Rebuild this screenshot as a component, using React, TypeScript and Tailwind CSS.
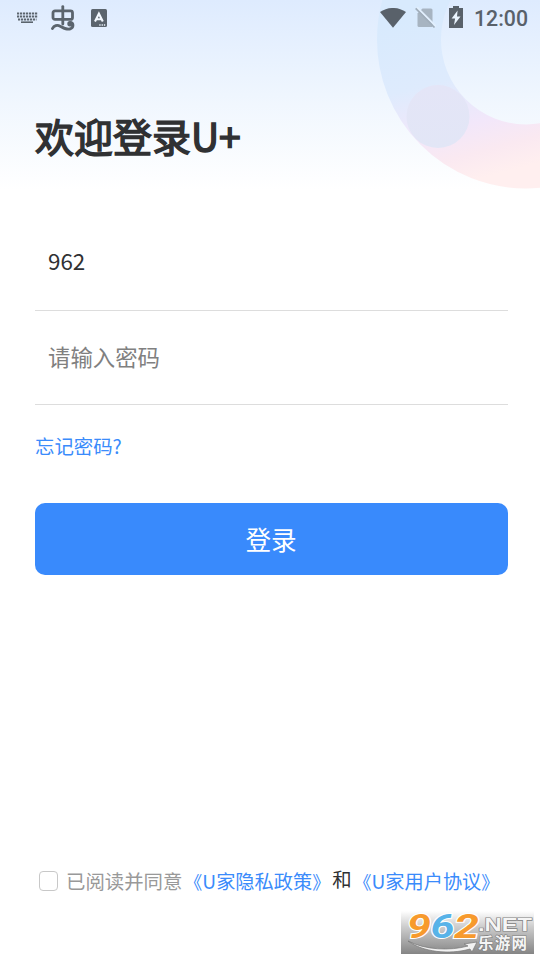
import { useState } from 'react'

/** Small status bar glyphs on the left: keyboard, worm, input method. */
function StatusLeft() {
  return (
    <div className="flex items-center text-[#5b646d]">
      <svg className="h-[14px] w-[22px]" viewBox="0 0 22 14" fill="none" stroke="currentColor">
        <path d="M1 2.500H21.500" strokeWidth="1.800" strokeDasharray="2.200 0.800" />
        <path d="M1 5.500H21.500" strokeWidth="1.800" strokeDasharray="2.200 0.800" />
        <path d="M2 8.500H20.500" strokeWidth="1.800" strokeDasharray="2.200 0.800" />
        <path d="M5 11.200H17" strokeWidth="1.600" />
      </svg>
      <svg
        className="ml-[12px] h-[28px] w-[26px]"
        viewBox="0 0 26 28"
        fill="none"
        stroke="currentColor"
        strokeWidth="2.8"
        strokeLinecap="round"
        strokeLinejoin="round"
      >
        <rect x="3" y="6.800" width="19.500" height="8.600" rx="2" />
        <path d="M12.800 2.600V20" />
        <path d="M2.400 24.600c1.600-3 4.800-4 7.800-2.400 4 2.200 7 4 10.600 2.400 3-1.500 2.800-6-.2-6" />
        <circle cx="20" cy="19.800" r="1.300" />
      </svg>
      <svg className="ml-[15px] h-[18px] w-[16px]" viewBox="0 0 16 18">
        <rect width="16" height="18" rx="1.500" fill="currentColor" />
        <path d="M4 12.500 7.900 4.700 11.800 12.500M5.500 10.300h4.800" fill="none" stroke="#f4f9ff" strokeWidth="2.100" />
        <path d="M8.300 16h6" stroke="#eef5fe" strokeWidth="1.300" strokeDasharray="1.300 1" />
      </svg>
    </div>
  )
}

function StatusRight() {
  return (
    <div className="flex items-center text-[#59616a]">
      <svg className="h-[21px] w-[26px]" viewBox="0 0 26 21" fill="currentColor">
        <path d="M0 4.100C7.500-1.400 18.500-1.400 26 4.100L13 19.800Z" />
      </svg>
      <svg className="ml-[9px] h-[22px] w-[21px]" viewBox="0 0 21 22">
        <path d="M7.500 1.500H16a1.500 1.500 0 0 1 1.500 1.500V20H4a1.500 1.500 0 0 1-1.500-1.500V6.500Z" fill="#a7b4c1" />
        <path d="M1.800.2 21 19.400" stroke="#e2effd" strokeWidth="2" />
        <path d="M.7 1.300 19.500 20.500" stroke="#a0adba" strokeWidth="1.700" />
      </svg>
      <svg className="ml-[13px] mb-[2px] h-[22px] w-[14px]" viewBox="0 0 14 22">
        <path d="M4 0h6v2h4v20H0V2h4Z" fill="currentColor" />
        <path d="M8.600 4.500 2.600 12.500h3.500L5 19 11.500 10.500H8Z" fill="#eaf4fe" />
      </svg>
      <span className="ml-[11px] mt-[2px] font-[Roboto,sans-serif] text-[21.300px] font-medium leading-6">12:00</span>
    </div>
  )
}

/** Pale ring and dot behind the top right corner. */
function HeaderArt() {
  return (
    <svg className="absolute right-0 top-0 h-[200px] w-[180px]" viewBox="360 0 180 200">
      <defs>
        <linearGradient id="ring" gradientUnits="userSpaceOnUse" x1="400" y1="20" x2="445" y2="188">
          <stop offset="0" stopColor="#d8eafd" />
          <stop offset="0.4" stopColor="#deebfd" />
          <stop offset="0.68" stopColor="#f2e7fa" />
          <stop offset="0.85" stopColor="#fae9f1" />
          <stop offset="1" stopColor="#ffefef" />
        </linearGradient>
        <linearGradient id="dot" x1="0" y1="0" x2="0" y2="1">
          <stop offset="0" stopColor="#e4e5f7" />
          <stop offset="1" stopColor="#e2e6f6" />
        </linearGradient>
      </defs>
      <circle cx="526" cy="39.500" r="117" fill="none" stroke="url(#ring)" strokeWidth="64" />
      <circle cx="438" cy="116.500" r="31.500" fill="url(#dot)" />
    </svg>
  )
}

function SiteBadge() {
  return (
    <svg
      className="absolute left-[401px] top-[911px] h-[43px] w-[133px] overflow-visible"
      viewBox="0 0 133 43"
      fontFamily="'Liberation Sans', 'Noto Sans CJK SC', sans-serif"
      fontWeight="bold"
    >
      <defs>
        <linearGradient id="badge" x1="0" y1="0" x2="0" y2="1">
          <stop offset="0" stopColor="#ffffff" />
          <stop offset="0.35" stopColor="#cfcfcf" />
          <stop offset="1" stopColor="#858585" />
        </linearGradient>
      </defs>
      <rect width="133" height="43" fill="url(#badge)" />
      <g fontSize="33" fontFamily="Roboto, sans-serif" fontStyle="italic" stroke="#ffffff" strokeWidth="2" paintOrder="stroke">
        <text x="6" y="26.500" textLength="24" lengthAdjust="spacingAndGlyphs" fill="#f79a2d">9</text>
        <text x="29.500" y="26.500" textLength="24" lengthAdjust="spacingAndGlyphs" fill="#58b3e8">6</text>
        <text x="53" y="26.500" textLength="25" lengthAdjust="spacingAndGlyphs" fill="#f79a2d">2</text>
      </g>
      <path d="M7 30C24 39 49 40 67 35L63 33 76 31 71 41 69 38C48 44 22 41 7 30Z" fill="#f2f2f2" stroke="#777777" strokeWidth="0.700" />
      <g fill="#f5f5f5" stroke="#808080" strokeWidth="1.200" paintOrder="stroke">
        <text x="77" y="20" fontSize="18" textLength="54" lengthAdjust="spacingAndGlyphs">.NET</text>
        <text x="77" y="38" fontSize="15.500" textLength="49">乐游网</text>
      </g>
    </svg>
  )
}

/** Agreement link; the book title marks are set a little smaller than the name. */
function DocLink({ name }: { name: string }) {
  return (
    <a className="flex items-center text-[19.200px] text-[#3a8bfb]">
      <span className="ml-[2px] text-lg leading-[30px]">《</span>
      {name}
      <span className="mr-[2px] text-lg leading-[30px]">》</span>
    </a>
  )
}

export default function App() {
  const [agreed, setAgreed] = useState(false)

  return (
    <div className="relative flex h-[960px] w-[540px] flex-col overflow-hidden bg-white font-['Noto_Sans_CJK_SC',sans-serif] text-[#303133]">
      <div className="absolute inset-x-0 top-0 h-[190px] bg-linear-to-b from-[#deebfe] via-[#eff6fe] to-white" />
      <HeaderArt />

      <header className="relative flex h-9 items-center justify-between pl-4 pr-3">
        <StatusLeft />
        <StatusRight />
      </header>

      <main className="relative flex flex-col pl-[35px] pr-8">
        <h1 className="mt-[70px] text-[39px] font-normal leading-[58px] [-webkit-text-stroke:1.5px_#303133]">
          欢迎登录U+
        </h1>

        <div className="mt-[50px] flex h-[97px] items-center border-b border-[#dddddd] pb-[4px] pl-[13px] text-[22.400px] leading-8">
          962
        </div>
        <div className="flex h-[94px] items-center border-b border-[#dddddd] pb-[4px] pl-[13px] text-[22.400px] leading-8 text-[#808080]">
          请输入密码
        </div>

        <a className="mt-[26px] text-[19.400px] leading-[30px] text-[#3a8bfb]">忘记密码?</a>

        <button type="button" className="mt-[42px] h-[72px] rounded-[10px] bg-[#398afc] pr-px text-[25.600px] text-white">
          登录
        </button>
      </main>

      <footer className="relative mt-[289px] flex items-center whitespace-nowrap pl-[39px] text-[19.400px] leading-[30px]">
        <button
          type="button"
          role="checkbox"
          aria-checked={agreed}
          onClick={() => setAgreed(!agreed)}
          className="h-5 w-[19px] rounded-[4px] border border-[#c8c8c8] bg-white"
        />
        <span className="ml-2 text-[#999999]">已阅读并同意</span>
        <DocLink name="U家隐私政策" />
        <span className="mb-[4px]">和</span>
        <DocLink name="U家用户协议" />
      </footer>

      <SiteBadge />
    </div>
  )
}
